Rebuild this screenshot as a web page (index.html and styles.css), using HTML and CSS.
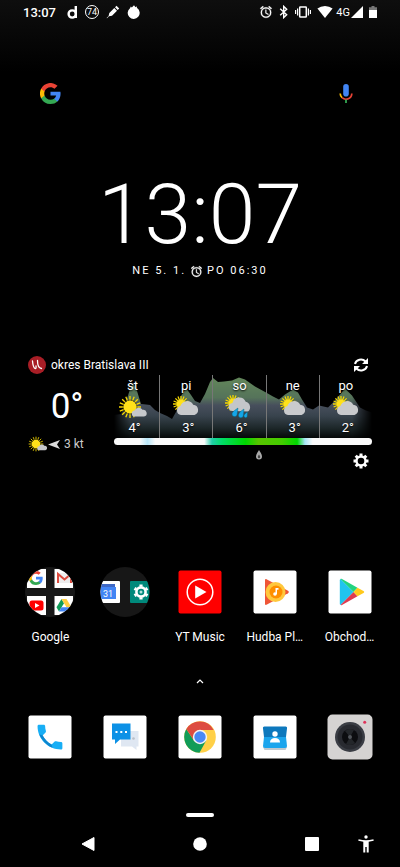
FILE: index.html
```html
<!DOCTYPE html>
<html lang="sk">
<head>
  <meta charset="UTF-8">
  <meta name="viewport" content="width=device-width, initial-scale=1.0">
  <title>Home</title>
  <link rel="stylesheet" href="styles.css">
</head>
<body>
  <!-- shared symbols -->
  <svg class="symbols" aria-hidden="true">
    <symbol id="google" viewBox="0 0 48 48">
      <path fill="#4285f4" d="M47 24.5c0-1.600-.15-3.200-.4-4.700H24v9h13a11 11 0 0 1-4.800 7.300v6h7.700C44.400 38 47 31.800 47 24.500z"/>
      <path fill="#34a853" d="M24 48c6.500 0 11.900-2.100 15.900-5.800l-7.700-6c-2.200 1.400-4.900 2.300-8.200 2.300-6.300 0-11.600-4.200-13.500-9.900H2.500v6.200A24 24 0 0 0 24 48z"/>
      <path fill="#fbbc05" d="M10.500 28.600a14.400 14.400 0 0 1 0-9.200v-6.200h-8a24 24 0 0 0 0 21.600z"/>
      <path fill="#ea4335" d="M24 9.500c3.500 0 6.700 1.200 9.200 3.600l6.900-6.900A24 24 0 0 0 2.500 13.200l8 6.200c1.900-5.700 7.200-9.900 13.500-9.900z"/>
    </symbol>
    <symbol id="alarm" viewBox="0 0 24 24">
      <path fill="currentColor" stroke="currentColor" stroke-width=".5" d="M22 5.700l-4.600-3.900-1.300 1.500 4.600 3.900zM7.900 3.400L6.600 1.900 2 5.700l1.300 1.500zM12.500 8H11v6l4.700 2.900.8-1.300-4-2.300zM12 4a9 9 0 1 0 0 18 9 9 0 0 0 0-18zm0 16a7 7 0 1 1 0-14 7 7 0 0 1 0 14z"/>
    </symbol>
    <symbol id="sunny" viewBox="0 0 30 24">
      <path stroke="#f5d800" stroke-width="1.300" d="M12 1v22M1 12h22M4.200 4.200l15.600 15.600M4.200 19.800L19.800 4.200M7.800 1.800l8.400 20.400M1.800 16.200l20.400-8.400M1.800 7.800l20.400 8.400M7.800 22.200l8.400-20.400"/>
      <circle cx="12" cy="12" r="7.500" fill="#000" opacity=".4"/>
      <circle cx="12" cy="12" r="6.500" fill="#ffe11a"/>
      <path fill="#c6c8cc" d="M17 21.500a3 3 0 0 1-.4-6 4.500 4.500 0 0 1 7.900-.7 3.400 3.400 0 0 1 1.500 6.700z"/>
    </symbol>
    <symbol id="cloudy" viewBox="0 0 30 24">
      <path stroke="#f5d800" stroke-width="1.300" d="M10 1v16M2 9h16M4.400 3.400l11.200 11.200M4.400 14.600L15.600 3.400M7 1.600l6 14.800M2.600 12l14.800-6M2.600 6l14.800 6M7 16.400L13 1.600"/>
      <circle cx="10" cy="9" r="4.500" fill="#ffe11a"/>
      <path fill="#c9cacd" d="M10 20a4.600 4.600 0 0 1-.6-9 7 7 0 0 1 12.800-1.300A5.300 5.300 0 0 1 23.500 20z"/>
    </symbol>
    <symbol id="rainy" viewBox="0 0 30 24">
      <path stroke="#f5d800" stroke-width="1.300" d="M9 0v16M1 8h16M3.400 2.400l11.200 11.200M3.400 13.600L14.600 2.400M6 .6l6 14.800M1.600 11l14.800-6M1.600 5l14.800 6M6 15.400L12 .6"/>
      <circle cx="9" cy="8" r="4.500" fill="#ffe11a"/>
      <path fill="#c4c6c9" d="M9 16a4 4 0 0 1-.6-8 7 7 0 0 1 13.300-1.200A5.500 5.500 0 0 1 24 16.500z"/>
      <path fill="#15a5e8" stroke="#067" stroke-width=".4" d="M14 13l-1 7a2.600 2.600 0 0 1-5-1c0-2 3-4 6-6zM20 14l-.7 7a2.500 2.500 0 0 1-4.900-.7c0-2 2.600-4.600 5.600-6.300zM23.500 17l-.3 4.500a1.700 1.700 0 0 1-3.300-.5c0-1.500 1.500-2.800 3.600-4z"/>
    </symbol>
  </svg>

  <header class="status-bar">
    <time class="status-time">13:07</time>
    <div class="status-notifications">
      <svg width="12" height="14" viewBox="0 0 12 14"><path fill="none" stroke="#fff" stroke-width="2.400" d="M9.800 1v12M9.800 9a3.600 3.600 0 1 1-7.200 0 3.600 3.600 0 0 1 7.200 0z"/></svg>
      <span class="badge-count">74</span>
      <svg width="14" height="14" viewBox="0 0 14 14"><path fill="#fff" d="M10.500.8l2.700 2.700-1.500 1.500L9 2.300zM8.300 3l2.700 2.700-5 5-3 .6-2 2-.4-.4 2-2L3.300 8z"/></svg>
      <svg width="14" height="14" viewBox="0 0 14 14"><path fill="#fff" d="M7 .3l1.500 2 1-1 .6 1.700A6 6 0 1 1 3 3.200l.8-1.700 1 .9z"/></svg>
    </div>
    <div class="status-system">
      <svg width="14" height="14"><use href="#alarm"/></svg>
      <svg width="10" height="14" viewBox="0 0 10 14"><path fill="none" stroke="#fff" stroke-width="1.400" d="M1.200 3.800l6.500 6L4.700 12.600V1.400l3 2.800-6.500 6"/></svg>
      <svg width="16" height="14" viewBox="0 0 16 14"><rect x="4.700" y="2" width="6.600" height="10" rx=".6" fill="none" stroke="#fff" stroke-width="1.500"/><path stroke="#fff" stroke-width="1.200" d="M2.600 3.500v7M.6 5v4M13.400 3.500v7M15.400 5v4"/></svg>
      <svg width="16" height="14" viewBox="0 0 16 14"><path fill="#fff" d="M8 13L.4 3.600a12 12 0 0 1 15.200 0z"/></svg>
      <span class="network">4G</span>
      <svg width="12" height="14" viewBox="0 0 12 14"><path fill="#fff" d="M12 1v12H0z"/></svg>
      <svg class="battery" width="8" height="14" viewBox="0 0 8 14"><path fill="#777" d="M2.500 1h3v1.200H8V5H0V2.200h2.500z"/><path fill="#fff" d="M0 5h8v8H0z"/></svg>
    </div>
  </header>

  <main>
    <div class="search">
      <a href="#" aria-label="Google"><svg width="21" height="21"><use href="#google"/></svg></a>
      <button aria-label="Hlasové vyhľadávanie">
        <svg width="14" height="20" viewBox="0 0 14 20">
          <rect x="4.200" y="0" width="5.600" height="12.500" rx="2.800" fill="#4285f4"/>
          <path fill="none" stroke="#fbbc05" stroke-width="1.700" d="M1.200 9.500a5.800 5.800 0 0 0 1.900 4.200"/>
          <path fill="none" stroke="#ea4335" stroke-width="1.700" d="M3.100 13.700a5.800 5.800 0 0 0 9.700-4.200"/>
          <path fill="#34a853" d="M6.100 15.500h1.800v3.500H6.100z"/>
        </svg>
      </button>
    </div>

    <section class="clock">
      <time class="clock-time">13:07</time>
      <p class="clock-date">NE 5. 1. <svg width="13" height="13"><use href="#alarm"/></svg> PO 06:30</p>
    </section>

    <section class="weather">
      <div class="weather-header">
        <svg width="18" height="18" viewBox="0 0 18 18"><circle cx="9" cy="9" r="9" fill="#a81e26"/><path fill="none" stroke="#fff" stroke-width="1.300" stroke-linecap="round" d="M4.500 5c.3 3.500.8 6.500 2.500 7.500 1 .3 1.300-1 1-2.500M9.500 4.500c0 4 .5 7.500 4 8"/></svg>
        <span>okres Bratislava III</span>
        <button aria-label="Obnoviť">
          <svg width="16" height="16" viewBox="0 0 16 16"><path fill="none" stroke="#fff" stroke-width="2" d="M2 7a6 5.500 0 0 1 10.500-2.500M14 9a6 5.500 0 0 1-10.500 2.500"/><path fill="#fff" d="M15 1v6H9zM1 15V9h6z"/></svg>
        </button>
      </div>
      <div class="weather-body">
        <div class="current">
          <p class="current-temp">0°</p>
          <p class="current-wind">
            <svg width="20" height="16"><use href="#sunny"/></svg>
            <svg width="12" height="9" viewBox="0 0 12 9"><path fill="#ddd" d="M0 4.500L12 0 9 4.500 12 9z"/></svg>
            <span>3 kt</span>
          </p>
        </div>
        <div class="forecast">
          <svg class="chart" viewBox="0 0 258 63" preserveAspectRatio="none" aria-hidden="true">
            <defs>
              <linearGradient id="terrain" gradientUnits="userSpaceOnUse" x1="0" y1="0" x2="0" y2="63">
                <stop offset="0" stop-color="#64895a"/>
                <stop offset=".36" stop-color="#55735a"/>
                <stop offset=".48" stop-color="#474f5c"/>
                <stop offset=".65" stop-color="#38434d"/>
                <stop offset=".85" stop-color="#1c2628"/>
                <stop offset="1" stop-color="#050808"/>
              </linearGradient>
            </defs>
            <path fill="url(#terrain)" d="M0 40l7-1 5-12 4-13 3-6 4 8 4 13 5 .5 4 .5 5 5 5 3 7 3 5 3 4-7 5-16 5-8 5 7 4 6 5 2 5-9 5-12 3-4 5 4 6-.5 8-1 7-3 6 2 10 7 11 6 7 4 6 3 6-5 8-5 5 3 4 7 5 8 6 2 6-4 9 2 7-7 10-12 7 7 8 12 6 3 6 2v26H0z"/>
          </svg>
          <ol class="days">
            <li><span>št</span><svg width="30" height="24"><use href="#sunny"/></svg><b>4°</b></li>
            <li><span>pi</span><svg width="30" height="24"><use href="#cloudy"/></svg><b>3°</b></li>
            <li><span>so</span><svg width="30" height="24"><use href="#rainy"/></svg><b>6°</b></li>
            <li><span>ne</span><svg width="30" height="24"><use href="#cloudy"/></svg><b>3°</b></li>
            <li><span>po</span><svg width="30" height="24"><use href="#cloudy"/></svg><b>2°</b></li>
          </ol>
          <div class="rain-bar"></div>
          <div class="forecast-footer">
            <svg width="8" height="10" viewBox="0 0 8 10"><path fill="#aaa" d="M4 0c1 2 3 4 3 6.500a3 3 0 0 1-6 0C1 4 3 2 4 0z"/><path fill="#444" d="M4 4.500c.6 1 1.200 1.500 1.200 2.500a1.200 1.200 0 0 1-2.400 0c0-1 .6-1.500 1.200-2.500z"/></svg>
            <button aria-label="Nastavenia">
              <svg width="16" height="16" viewBox="0 0 16 16"><circle cx="8" cy="8" r="4.500" fill="none" stroke="#fff" stroke-width="2.400"/><path stroke="#fff" stroke-width="3" d="M8 .5V3M8 13v2.500M.5 8H3M13 8h2.500M2.700 2.700l1.800 1.800M11.500 11.500l1.800 1.800M2.700 13.300l1.800-1.800M11.500 4.500l1.800-1.800"/></svg>
            </button>
          </div>
        </div>
      </div>
    </section>

    <nav class="apps">
      <a href="#" class="app">
        <svg width="50" height="50" viewBox="0 0 50 50">
          <defs><clipPath id="folder"><circle cx="25" cy="25" r="24.500"/></clipPath></defs>
          <circle cx="25" cy="25" r="25" fill="#171717"/>
          <g clip-path="url(#folder)">
            <path fill="#fff" d="M2 2h19v19H2zM29.500 2H48v19H29.500zM2 29h19v19H2zM29.500 29H48v19H29.500z"/>
            <use href="#google" x="4" y="4" width="14" height="14"/>
            <path fill="#eee" d="M33 6h13v10H33z"/><path fill="none" stroke="#dc4b3e" stroke-width="2" d="M33 16V7l6.500 5.500L46 7v9"/>
            <rect x="4.500" y="33.500" width="14" height="10" rx="2.500" fill="#f00"/><path fill="#fff" d="M10 36l4.500 2.500L10 41z"/>
            <path fill="#0f9d58" d="M36.500 32l2.500 4.300-5 8.200-2.500-4.200z"/><path fill="#ffcd40" d="M36.500 32h5l5 8.300h-5z"/><path fill="#4285f4" d="M36.500 40.300h10L44 44.500H34z"/>
          </g>
        </svg>
        <span>Google</span>
      </a>
      <a href="#" class="app" aria-label="Priečinok">
        <svg width="50" height="50" viewBox="0 0 50 50">
          <circle cx="25" cy="25" r="25" fill="#171717"/>
          <g clip-path="url(#folder)">
            <rect x="-2" y="14" width="22" height="22" rx="1" fill="#fff"/>
            <path fill="#3f68c5" d="M1 17h14v4H1z"/><path fill="#4285f4" d="M0 20h16v12H0z"/>
            <text x="3" y="30" class="calendar-day">31</text>
            <rect x="30" y="14" width="22" height="22" rx="1" fill="#00897b"/>
            <circle cx="41" cy="25" r="4.600" fill="none" stroke="#fff" stroke-width="2.600"/>
            <path stroke="#fff" stroke-width="3.200" d="M41 17.500v2M41 30.500v2M34.500 21.300l1.700 1M45.800 27.700l1.700 1M34.500 28.700l1.700-1M45.800 22.300l1.700-1"/>
            <circle cx="41" cy="25" r="1.500" fill="#b2dfdb"/>
          </g>
        </svg>
      </a>
      <a href="#" class="app">
        <svg width="50" height="50" viewBox="0 0 50 50">
          <rect x="3.500" y="3.500" width="43" height="43" rx="2" fill="#f00"/>
          <circle cx="25" cy="25" r="12.800" fill="none" stroke="#fff" stroke-width="1.500"/>
          <path fill="#fff" d="M20.200 18.500L31.500 25l-11.300 6.500z"/>
        </svg>
        <span>YT Music</span>
      </a>
      <a href="#" class="app">
        <svg width="50" height="50" viewBox="0 0 50 50">
          <rect x="3.500" y="3.500" width="43" height="43" rx="2" fill="#fff"/>
          <path fill="#ef5536" d="M15 13c0-1 .7-1.200 1.500-.8L38 23.700c1 .6 1 2 0 2.600L16.500 37.800c-.8.400-1.500 0-1.500-.8z"/>
          <circle cx="25.500" cy="25" r="10" fill="#ffc83d"/>
          <circle cx="26" cy="25" r="6.500" fill="#ff8f00"/>
          <circle cx="25" cy="27" r="1.800" fill="#fff"/><path fill="#fff" d="M25.500 21h3v1.800H27V27h-1.500z"/>
        </svg>
        <span>Hudba Pl…</span>
      </a>
      <a href="#" class="app">
        <svg width="50" height="50" viewBox="0 0 50 50">
          <rect x="3.500" y="3.500" width="43" height="43" rx="2" fill="#fff"/>
          <path fill="#20c4ee" d="M15.500 12L28.500 25l-13 13c-.5-.3-.7-.8-.7-1.500v-23c0-.7.200-1.200.7-1.500z"/>
          <path fill="#21d37f" d="M15.500 12c.4-.2 1-.2 1.500.1l15.500 8.600-4 4.300z"/>
          <path fill="#dd3b50" d="M15.500 38c.4.200 1 .2 1.500-.1l15.500-8.600-4-4.300z"/>
          <path fill="#ffc91c" d="M32.500 20.700l6 3.300c.9.500.9 1.500 0 2l-6 3.300-4-4.300z"/>
        </svg>
        <span>Obchod…</span>
      </a>
    </nav>

    <button class="drawer-handle" aria-label="Všetky aplikácie">
      <svg width="8" height="6" viewBox="0 0 8 6"><path fill="none" stroke="#fff" stroke-width="1.200" d="M1 5l3-3 3 3"/></svg>
    </button>

    <nav class="apps dock">
      <a href="#" class="app" aria-label="Telefón">
        <svg width="50" height="50" viewBox="0 0 50 50">
          <rect x="3.500" y="3.500" width="43" height="43" rx="2" fill="#fff"/>
          <path fill="#18aef5" transform="translate(8.400 8.600) scale(1.380)" d="M6.620 10.790c1.440 2.830 3.760 5.140 6.590 6.590l2.200-2.200c.27-.27.67-.36 1.020-.24 1.120.37 2.330.57 3.570.57.55 0 1 .45 1 1V20c0 .55-.45 1-1 1-9.390 0-17-7.610-17-17 0-.55.45-1 1-1h3.500c.55 0 1 .45 1 1 0 1.250.2 2.450.57 3.570.11.35.03.74-.25 1.020z"/>
          <path fill="#0c86cf" d="M14.400 22.400l3.200.9c2 4 5.100 7.200 9 9.200l.9 3.200c-5.800-2.600-10.500-7.400-13.100-13.300z"/>
        </svg>
      </a>
      <a href="#" class="app" aria-label="Správy">
        <svg width="50" height="50" viewBox="0 0 50 50">
          <rect x="3.500" y="3.500" width="43" height="43" rx="2" fill="#fff"/>
          <path fill="#dfe7f2" d="M21 19h17.500v15.500h-2V38L32 34.500H21z"/>
          <circle cx="33.500" cy="26.500" r="1.300" fill="#b8bfc9"/>
          <path fill="#0c91e6" d="M12 11.500h18.500v16H20L15 32v-4.500h-3z"/>
          <path fill="#fff" d="M15.500 19h2v2h-2zM20.300 19h2v2h-2zM25 19h2v2h-2z"/>
        </svg>
      </a>
      <a href="#" class="app" aria-label="Chrome">
        <svg width="50" height="50" viewBox="0 0 50 50">
          <rect x="3.500" y="3.500" width="43" height="43" rx="2" fill="#fff"/>
          <circle cx="25" cy="25" r="15.800" fill="#ffd047"/>
          <path fill="#dd4d40" d="M25 25L11.300 17.100A15.800 15.800 0 0 1 38.700 17.900H25z"/>
          <path fill="#109c58" d="M11.300 17.100A15.800 15.800 0 0 0 24.500 40.800L31.200 28.600 18.900 28.500z"/>
          <path fill="#dd4d40" d="M25 17.900L18.900 28.500 11.300 17.100z"/>
          <circle cx="25" cy="25" r="7.200" fill="#f4f4f4"/>
          <circle cx="25" cy="25" r="5.700" fill="#4989f5"/>
        </svg>
      </a>
      <a href="#" class="app" aria-label="Kontakty">
        <svg width="50" height="50" viewBox="0 0 50 50">
          <rect x="3.500" y="3.500" width="43" height="43" rx="2" fill="#fff"/>
          <path fill="#bfc8ce" d="M13 35h24l-1.500 3h-21z"/>
          <path fill="#0d78bd" d="M14.500 14.500h21a1.500 1.500 0 0 1 1.500 2L36 25H14L13 16.500a1.500 1.500 0 0 1 1.500-2z"/>
          <path fill="#1ba5ed" d="M14 25h22L37 34a2 2 0 0 1-2 2H15a2 2 0 0 1-2-2z"/>
          <circle cx="25" cy="22" r="2.700" fill="#fff"/><path fill="#fff" d="M20 30.500c0-3 2-4.500 5-4.500s5 1.500 5 4.500z"/>
        </svg>
      </a>
      <a href="#" class="app" aria-label="Fotoaparát">
        <svg width="50" height="50" viewBox="0 0 50 50">
          <rect x="2.500" y="2.500" width="45" height="45" rx="5" fill="#d5d3d2"/>
          <circle cx="25" cy="25" r="15" fill="#3a3d44"/>
          <circle cx="25" cy="25" r="12.500" fill="#282a30"/>
          <circle cx="25" cy="25" r="8" fill="#0c0d10"/>
          <path fill="#34373c" d="M25 25l-5-6a8 8 0 0 1 9-1zM25 25l5 6a8 8 0 0 1-9 1z" opacity=".6"/>
          <circle cx="25" cy="25" r="2" fill="#51545a"/>
          <circle cx="39.700" cy="10.300" r="1.500" fill="#e0335a"/>
        </svg>
      </a>
    </nav>
    <div class="page-indicator"></div>
  </main>

  <footer class="nav-bar">
    <button class="nav-back" aria-label="Späť"><svg width="14" height="16" viewBox="0 0 14 16"><path fill="#fff" stroke="#fff" stroke-linejoin="round" d="M13 1.500v13L1 8z"/></svg></button>
    <button class="nav-home" aria-label="Domov"><svg width="14" height="14" viewBox="0 0 14 14"><circle cx="7" cy="7" r="6.800" fill="#fff"/></svg></button>
    <button class="nav-recents" aria-label="Prehľad"><svg width="14" height="14" viewBox="0 0 14 14"><rect width="14" height="14" rx="1" fill="#fff"/></svg></button>
    <button class="nav-access" aria-label="Dostupnosť"><svg width="16" height="18" viewBox="0 0 16 18"><circle cx="8" cy="2" r="1.700" fill="#fff"/><path fill="#fff" d="M.6 4.200c5 1.300 9.800 1.300 14.800 0l.3 1.500c-1.800.5-3.500.8-5 1V17.500H8.700V12H7.300v5.500H5.300V6.700c-1.500-.2-3.200-.5-5-1z"/></svg></button>
  </footer>
</body>
</html>
```

FILE: styles.css
```css
* {
  box-sizing: border-box;
}

body {
  margin: 0;
  min-height: 100vh;
  display: flex;
  flex-direction: column;
  font-family: Roboto, "Liberation Sans", sans-serif;
  font-size: 12px;
  color: #fff;
  background: linear-gradient(#0e0e0e, #000 72px) #000;
}

p, ol {
  margin: 0;
  padding: 0;
}

svg {
  display: block;
  flex: none;
}

a {
  color: inherit;
  text-decoration: none;
}

button {
  padding: 0;
  border: none;
  background: none;
  color: inherit;
  cursor: pointer;
}

.symbols {
  position: absolute;
  width: 0;
  height: 0;
}

/* status bar */
.status-bar {
  display: flex;
  align-items: center;
  height: 24px;
  padding: 0 23px;
}

.status-time {
  font-size: 13px;
  font-weight: 500;
}

.status-notifications {
  display: flex;
  align-items: center;
  gap: 7px;
  margin-left: 10px;
}

.badge-count {
  width: 14px;
  height: 14px;
  border: 1px solid #fff;
  border-radius: 50%;
  font-size: 9px;
  line-height: 12px;
  text-align: center;
}

.status-system {
  display: flex;
  align-items: center;
  gap: 6px;
  margin-left: auto;
}

.network {
  margin: 0 -5px 0 -3px;
  font-size: 11px;
}

/* search */
.search {
  display: flex;
  align-items: center;
  justify-content: space-between;
  padding: 0 47px 0 40px;
  margin-top: 59px;
}

/* clock */
.clock {
  text-align: center;
  margin-top: 62px;
}

.clock-time {
  display: block;
  font-size: 84px;
  font-weight: 300;
  line-height: 97px;
}

.clock-date {
  display: flex;
  align-items: center;
  justify-content: center;
  gap: 4px;
  font-size: 11px;
  line-height: 16px;
  letter-spacing: 2px;
}

/* weather */
.weather {
  padding: 0 28px;
  margin-top: 76px;
}

.weather-header {
  display: flex;
  align-items: center;
  gap: 5px;
  height: 20px;
}

.weather-header button {
  margin: 0 3px 0 auto;
}

.weather-body {
  display: flex;
}

.current {
  display: flex;
  flex-direction: column;
  width: 78px;
  padding-top: 12px;
}

.current-temp {
  font-size: 35px;
  line-height: 40px;
  text-align: center;
}

.current-wind {
  display: flex;
  align-items: center;
  margin-top: 9px;
  line-height: 16px;
  color: #ccc;
}

.current-wind span {
  margin-left: 4px;
}

.forecast {
  flex: 1;
  display: grid;
  grid-template-rows: 63px 7px auto;
}

.chart {
  grid-area: 1 / 1;
  width: calc(100% - 8px);
  height: 63px;
  margin-left: 8px;
  -webkit-mask-image: linear-gradient(90deg, transparent, #000 16px, #000 calc(100% - 20px), transparent);
  mask-image: linear-gradient(90deg, transparent, #000 16px, #000 calc(100% - 20px), transparent);
}

.days {
  grid-area: 1 / 1;
  z-index: 1;
  display: grid;
  grid-template-columns: repeat(5, 1fr);
  list-style: none;
}

.days li {
  display: flex;
  flex-direction: column;
  align-items: center;
  font-size: 13px;
  line-height: 18px;
  padding-top: 2px;
  text-shadow: 0 1px 2px #000;
}

.days li + li {
  border-left: 1px solid #777;
}

.days b {
  font-weight: 400;
  padding-left: 4px;
}

.rain-bar {
  margin-left: 8px;
  border-radius: 4px;
  background: linear-gradient(90deg, #fafafa 10%, #b8e6f8 13%, #fafafa 16%, #fafafa 35%, #20cfa8 38%, #0d6 42%, #00d800 51%, #58c400 56%, #4c0 65%, #00d800 71%, #a8e6f8 74%, #fafafa 77%);
}

.forecast-footer {
  display: flex;
  justify-content: space-between;
  padding: 5px 3px 0 149px;
}

.forecast-footer button {
  margin-top: 3px;
}

/* app grid */
.apps {
  display: grid;
  grid-template-columns: repeat(5, 1fr);
  padding: 0 13px;
  margin-top: 98px;
}

.app {
  display: flex;
  flex-direction: column;
  align-items: center;
  gap: 12px;
  min-width: 0;
}

.app span {
  white-space: nowrap;
  line-height: 16px;
}

.calendar-day {
  font-size: 9px;
  fill: #fff;
}

.drawer-handle {
  display: block;
  margin: 33px auto 0;
}

.dock {
  margin-top: 28px;
}

.page-indicator {
  width: 28px;
  height: 4px;
  margin: 51px auto 0;
  border-radius: 2px;
  background: #fff;
}

/* navigation bar */
.nav-bar {
  display: grid;
  grid-template-columns: 60fr 56fr 56fr 56fr 56fr 56fr 52fr 8fr;
  height: 46px;
  margin-top: auto;
}

.nav-bar button {
  display: flex;
  align-items: center;
  justify-content: center;
}

.nav-back {
  grid-column: 2;
}

.nav-home {
  grid-column: 4;
}

.nav-recents {
  grid-column: 6;
}

.nav-access {
  grid-column: 7;
}
```
